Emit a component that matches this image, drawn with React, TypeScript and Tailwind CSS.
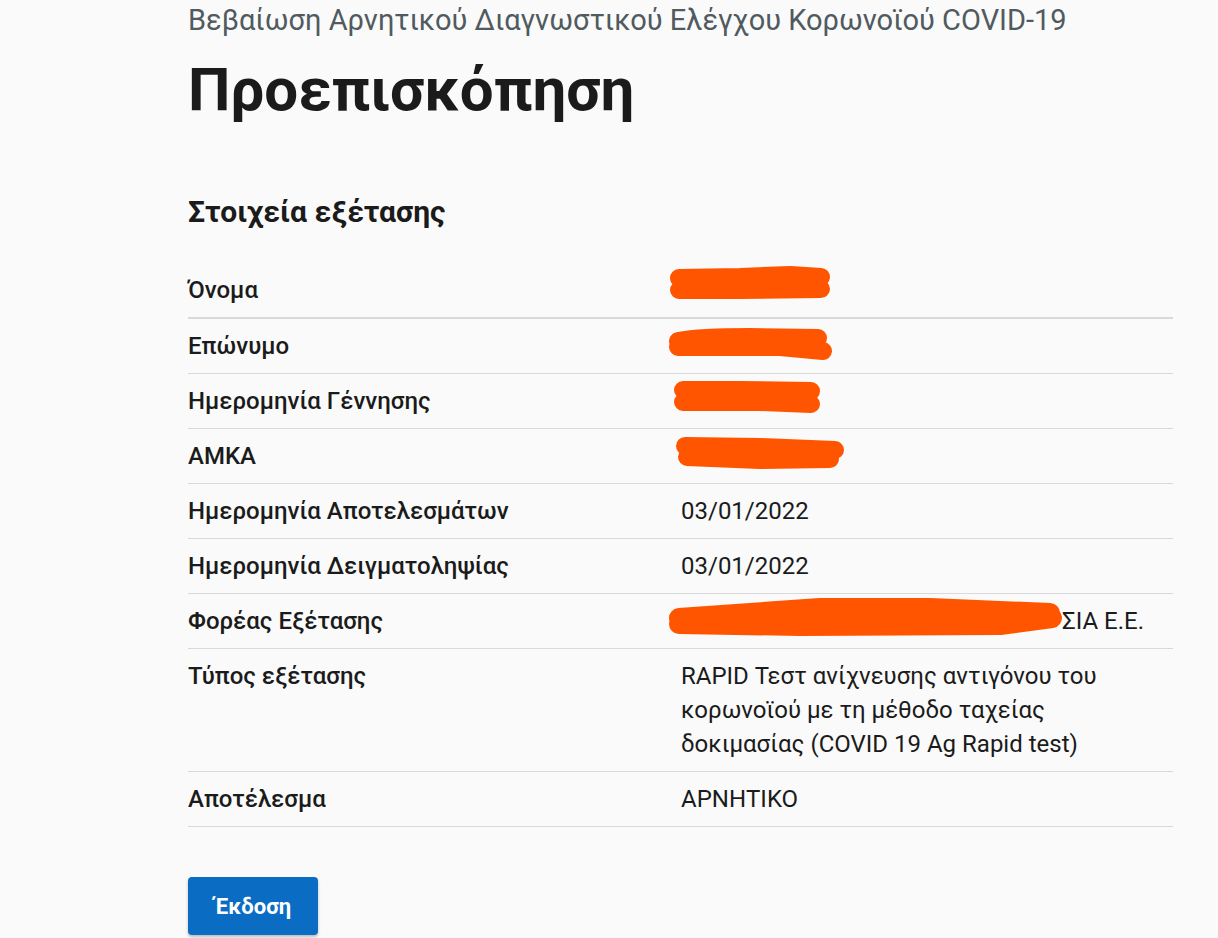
import React from "react";

const ORANGE = "#ff5500";

function Scribble({ w, paths, sw = 18, className }: { w: number; paths: string[]; sw?: number; className: string }) {
  return (
    <svg className={className} width={w} height={55} viewBox={`0 0 ${w} 55`} fill="none">
      {paths.map((d, i) => (
        <path key={i} d={d} stroke={ORANGE} strokeWidth={sw} strokeLinecap="round" strokeLinejoin="round" />
      ))}
    </svg>
  );
}

type Row = { label: string; value?: React.ReactNode; scribble?: { w: number; paths: string[]; sw?: number } };

const rows: Row[] = [
  { label: "Όνομα", scribble: { w: 180, paths: ["M14 15 L75 14 L125 12 L156 14", "M14 27 L75 27 L156 26"] } },
  { label: "Επώνυμο", scribble: { w: 180, paths: ["M13 22 Q35 18 85 18 L153 19", "M13 28 L115 28 L158 32"] } },
  { label: "Ημερομηνία Γέννησης", scribble: { w: 180, paths: ["M18 16 L75 16 L146 17", "M18 28 L95 28 L146 30"] } },
  { label: "ΑΜΚΑ", scribble: { w: 190, paths: ["M20 17 L95 18 L170 21", "M22 28 L95 31 L165 30"] } },
  { label: "Ημερομηνία Αποτελεσμάτων", value: "03/01/2022" },
  { label: "Ημερομηνία Δειγματοληψίας", value: "03/01/2022" },
  {
    label: "Φορέας Εξέτασης",
    value: <span className="pl-[381px]">ΣΙΑ Ε.Ε.</span>,
    scribble: { w: 400, sw: 20, paths: ["M14 24 Q95 18 155 14 L265 14 L385 19", "M14 30 L135 32 L335 31 L387 24"] },
  },
  { label: "Τύπος εξέτασης", value: "RAPID Τεστ ανίχνευσης αντιγόνου του κορωνοϊού με τη μέθοδο ταχείας δοκιμασίας (COVID 19 Ag Rapid test)" },
  { label: "Αποτέλεσμα", value: "ΑΡΝΗΤΙΚΟ" },
];

export default function App() {
  return (
    <div className="min-h-[938px] w-full bg-[#fafafa] font-['Roboto',sans-serif] text-[#1b1b1b]">
      <div className="ml-[188px] w-[985px] pt-[2px]">
        <div className="text-[29px] leading-[36px] text-[#505a5f]">
          Βεβαίωση Αρνητικού Διαγνωστικού Ελέγχου Κορωνοϊού COVID-19
        </div>
        <h1 className="mt-[12px] text-[60px] font-bold leading-[80px] text-[#1b1b1b]">Προεπισκόπηση</h1>
        <h2 className="mt-[64px] text-[30px] font-bold leading-[36px]">Στοιχεία εξέτασης</h2>
        <div className="mt-[33px] text-[24px] leading-[34px]">
          {rows.map((r, i) => (
            <div key={i} className={`flex border-[#d9d9d9] ${i === 0 ? "border-b-2" : "border-b"}`}>
              <div className="w-[493px] shrink-0 py-[10px] font-medium">{r.label}</div>
              <div className="relative flex-1 py-[10px] pr-[24px]">
                {r.scribble && (
                  <Scribble
                    className="absolute left-[-16px] top-0"
                    w={r.scribble.w}
                    paths={r.scribble.paths}
                    sw={r.scribble.sw}
                  />
                )}
                {r.value ?? "\u00a0"}
              </div>
            </div>
          ))}
        </div>
        <button className="mt-[50px] h-[58px] w-[130px] rounded-[4px] bg-[#0b6cc4] text-[22px] font-bold text-white shadow-[0_2px_3px_rgba(0,0,0,0.25)]">
          Έκδοση
        </button>
      </div>
    </div>
  );
}
